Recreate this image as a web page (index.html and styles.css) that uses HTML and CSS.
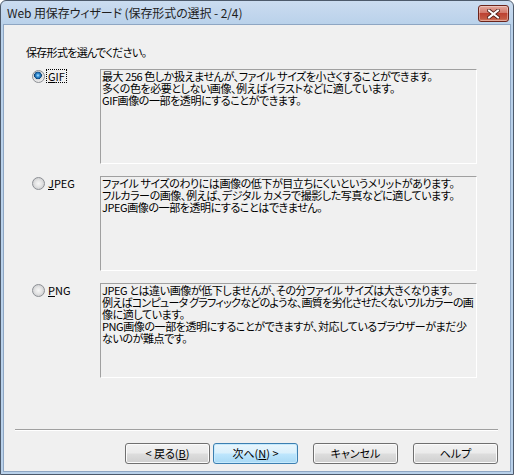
FILE: index.html
```html
<!DOCTYPE html>
<html lang="ja">
<head>
  <meta charset="UTF-8">
  <title>Web 用保存ウィザード</title>
  <link rel="stylesheet" href="styles.css">
</head>
<body>

  <div class="window">
    <div class="titlebar">
      <span class="title">Web 用保存ウィザード (保存形式の選択 - 2/4)</span>
      <span class="close">
        <svg width="13" height="10" viewBox="0 0 13 10">
          <path d="M2 1.5 L11 8.5 M11 1.5 L2 8.5" stroke="#4a1a14" stroke-width="3.6" stroke-linecap="square"/>
          <path d="M2 1.5 L11 8.5 M11 1.5 L2 8.5" stroke="#fff" stroke-width="2" stroke-linecap="square"/>
        </svg>
      </span>
    </div>

    <div class="client">
      <p class="prompt">保存形式を選んでください。</p>

      <div class="formats">
        <div class="choice">
          <span class="radio checked"></span>
          <span class="name focus"><u>G</u>IF</span>
        </div>
        <div class="desc">
          最大 256 色しか扱えませんが、ファイル サイズを小さくすることができます。<br>
          多くの色を必要としない画像、例えばイラストなどに適しています。<br>
          GIF画像の一部を透明にすることができます。
        </div>

        <div class="choice">
          <span class="radio"></span>
          <span class="name"><u>J</u>PEG</span>
        </div>
        <div class="desc">
          ファイル サイズのわりには画像の低下が目立ちにくいというメリットがあります。<br>
          フルカラーの画像、例えば、デジタル カメラで撮影した写真などに適しています。<br>
          JPEG画像の一部を透明にすることはできません。
        </div>

        <div class="choice">
          <span class="radio"></span>
          <span class="name"><u>P</u>NG</span>
        </div>
        <div class="desc">
          JPEG とは違い画像が低下しませんが、その分ファイル サイズは大きくなります。<br>
          <span class="tight">例えばコンピュータ グラフィックなどのような、画質を劣化させたくないフルカラーの画</span><br>
          像に適しています。<br>
          PNG画像の一部を透明にすることができますが、対応しているブラウザーがまだ少<br>
          ないのが難点です。
        </div>
      </div>

      <div class="footer">
        <div class="separator"></div>
        <div class="buttons">
          <button class="btn">&lt; 戻る(<u>B</u>)</button>
          <button class="btn default">次へ(<u>N</u>) &gt;</button>
          <button class="btn wide-gap">キャンセル</button>
          <button class="btn wide-gap">ヘルプ</button>
        </div>
      </div>
    </div>
  </div>

</body>
</html>
```

FILE: styles.css
```css
body {
  margin: 0;
  background: #fff;
  font-family: "Noto Sans CJK JP", sans-serif;
  font-size: 11px;
  color: #000;
}

.window {
  width: 514px;
  height: 475px;
  box-sizing: border-box;
  border: 1px solid #4d5a6b;
  border-radius: 6px 6px 0 0;
  background: linear-gradient(#cbdcf0, #b9d1ea 24px, #b9d1ea);
  padding: 0 2px 2px;
  display: flex;
  flex-direction: column;
}

.titlebar {
  height: 23px;
  display: flex;
  align-items: flex-start;
  justify-content: space-between;
}

.title {
  padding: 3px 0 0 4px;
  font-size: 12px;
  line-height: 18px;
  color: #1e1e1e;
  letter-spacing: -0.1px;
  font-feature-settings: "palt";
}

.close {
  margin: 4px 2px 0 0;
  width: 31px;
  height: 17px;
  box-sizing: border-box;
  border: 1px solid #6b241b;
  border-radius: 3px;
  background: linear-gradient(#e3a89d, #d3796b 45%, #bd4232 50%, #c35a43 85%, #d9826a);
  box-shadow: inset 0 0 0 1px rgba(255,255,255,0.35);
  display: flex;
  align-items: center;
  justify-content: center;
}

.client {
  flex: 1;
  background: #f0f0f0;
  border: 1px solid #8ea6c3;
  display: flex;
  flex-direction: column;
}

.prompt {
  margin: 21px 0 0 22px;
  line-height: 12px;
  letter-spacing: -0.7px;
  font-feature-settings: "palt";
}

.formats {
  margin: 11px 0 0 22px;
  display: grid;
  grid-template-columns: 74px 377px;
  row-gap: 12px;
}

.choice {
  display: flex;
  align-items: center;
  height: 12px;
  margin-top: 1px;
  padding-left: 6px;
}

.radio {
  width: 13px;
  height: 13px;
  box-sizing: border-box;
  border-radius: 50%;
  border: 1px solid #8c8f94;
  background: radial-gradient(circle at 50% 50%, #f6f6f6 0, #e6e6e6 3px, #cfd0d2 6px);
}

.radio.checked {
  background: radial-gradient(circle at 45% 40%, #b9e6ff 0, #3d9ae0 1.5px, #1a5f9e 3px, #0e3f6d 3.6px, #d3d5d7 4px, #e8e8e8 5.5px);
}

.name {
  margin-left: 2px;
  padding: 0 1px;
  line-height: 12px;
}

.name.focus {
  outline: 1px dotted #000;
}

.desc {
  height: 95px;
  box-sizing: border-box;
  border-style: solid;
  border-width: 1px;
  border-color: #a0a0a0 #fff #fff #a0a0a0;
  padding: 0 0 0 1px;
  line-height: 12px;
  letter-spacing: -0.42px;
  white-space: nowrap;
  overflow: hidden;
  font-feature-settings: "palt";
}

.desc .tight {
  letter-spacing: -0.75px;
}

.footer {
  margin-top: auto;
  padding-bottom: 7px;
}

.separator {
  margin: 0 12px 0 11px;
  border-top: 1px solid #a0a0a0;
  border-bottom: 1px solid #fff;
}

.buttons {
  margin: 12px 12px 0 0;
  display: flex;
  justify-content: flex-end;
}

.btn {
  width: 85px;
  height: 21px;
  margin-left: 3px;
  padding: 0;
  border: 1px solid #707070;
  border-radius: 3px;
  background: linear-gradient(#f2f2f2, #ebebeb 48%, #dddddd 52%, #cfcfcf);
  box-shadow: inset 0 0 0 1px #fbfbfb;
  font-family: "Noto Sans CJK JP", sans-serif;
  font-size: 11px;
  line-height: 17px;
  color: #000;
  font-feature-settings: "palt";
}

.btn.default {
  border-color: #3c7fb1;
  background: linear-gradient(#eaf6fd, #d9f0fc 48%, #bee6fd 52%, #a7d9f5);
  box-shadow: inset 0 0 0 1px #c6eafd;
}

.btn.wide-gap {
  margin-left: 15px;
}
```
